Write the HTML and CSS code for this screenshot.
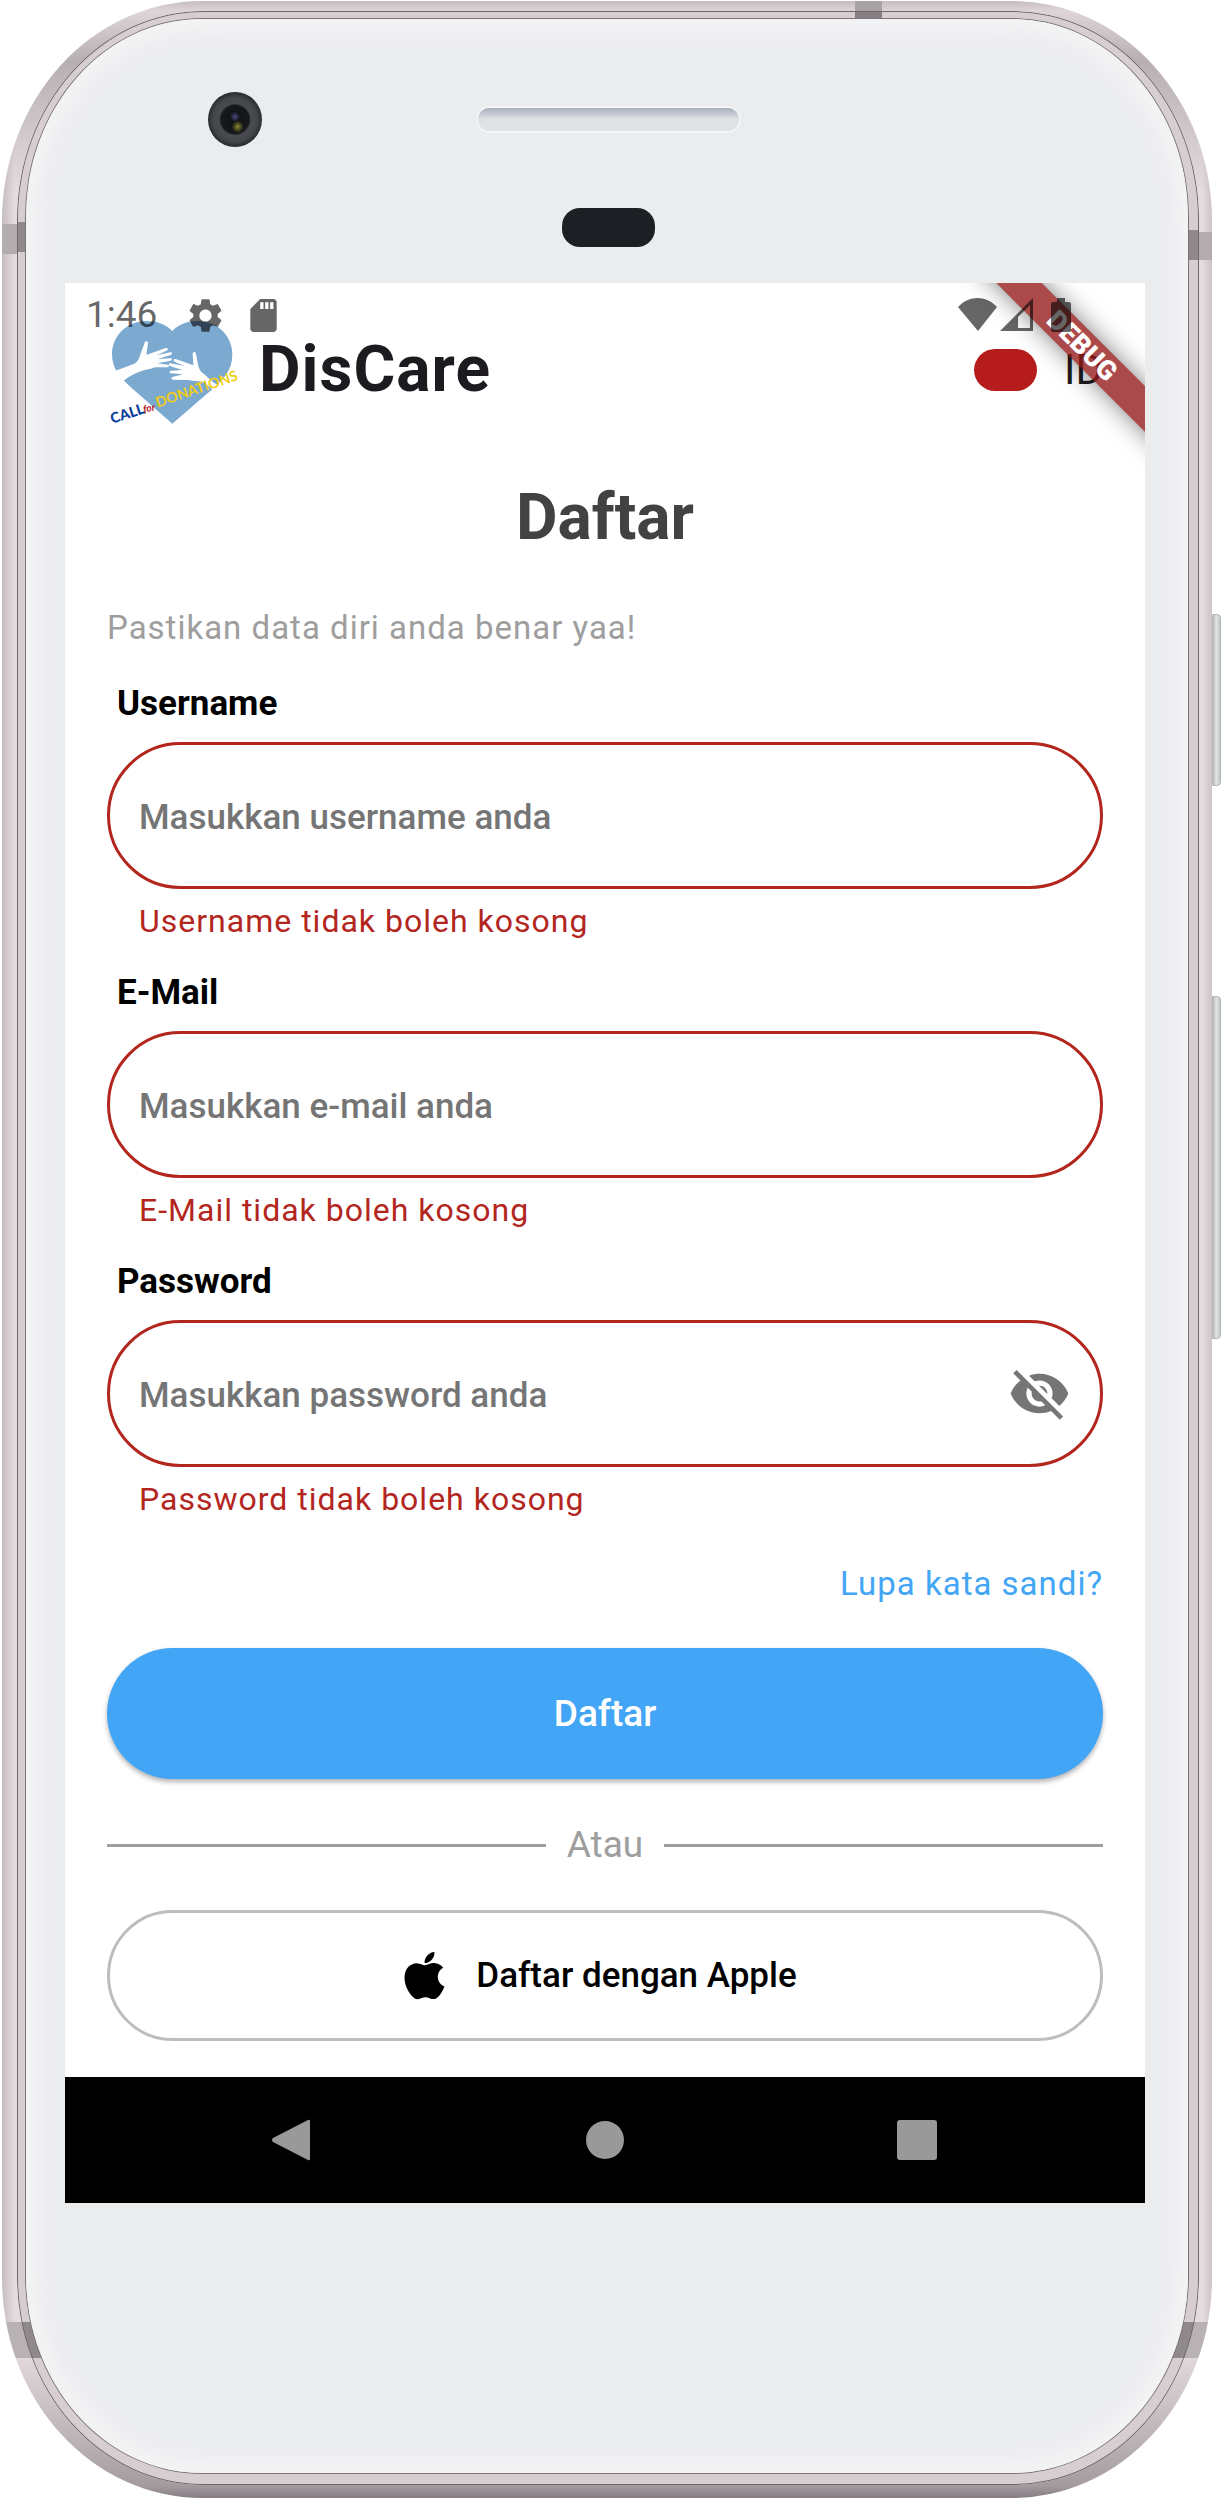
FILE: index.html
```html
<!DOCTYPE html>
<html lang="id">
<head>
<meta charset="utf-8">
<meta name="viewport" content="width=device-width, initial-scale=1">
<title>DisCare - Daftar</title>
<link rel="stylesheet" href="styles.css">
</head>
<body>
<div class="phone">
  <span class="side-key side-key-power"></span>
  <span class="side-key side-key-volume"></span>
  <div class="rim">
    <div class="face">
      <div class="face-top">
        <span class="camera"></span>
        <span class="speaker"></span>
        <span class="sensor"></span>
      </div>

      <div class="screen">
        <main class="app">
          <header class="app-bar">
            <svg class="logo" viewBox="6 9 402 327" role="img" aria-label="Call for Donations">
              <path fill="#7ba9cf" d="M202 57C182 36 155 27 125 27C65 27 21 72 21 127C21 170 45 196 80 228L202 335L326 228C355 202 382 175 382 127C382 72 338 27 279 27C248 27 222 36 202 57Z"/>
              <path fill="#fff" d="M18 182L36 175L88 155C97 150 100 144 103 136L119 92C121 85 130 87 129 94L124 128L134 125L182 108C189 106 191 113 185 116L154 130L196 121C202 120 203 127 197 129L158 141L196 139C202 139 202 146 196 146L158 154L188 158C194 160 192 166 187 166L150 166C138 172 122 173 110 177C90 184 73 192 56 206L30 222Z"/>
              <path fill="#fff" d="M345 222L326 212L297 186C286 179 282 170 279 158L273 125C271 118 263 119 263 126L265 160L212 141C205 139 203 146 209 149L238 162L196 154C190 153 189 160 194 162L232 174L198 176C192 177 193 184 198 184L234 187L202 195C197 197 199 204 205 203L250 204C266 208 283 206 298 211L322 232Z"/>
              <g class="logo-text">
                <text class="logo-call" transform="translate(22 335) rotate(-18)">CALL</text>
                <text class="logo-for" transform="translate(117 302) rotate(-12)">for</text>
                <text class="logo-donations" transform="translate(158 287) rotate(-19)">DONATIONS</text>
              </g>
            </svg>
            <span class="brand">DisCare</span>
            <button class="language" type="button" aria-label="Bahasa Indonesia"><span class="flag"></span>ID</button>
          </header>

          <h1 class="title">Daftar</h1>

          <form class="form">
            <p class="hint">Pastikan data diri anda benar yaa!</p>

            <div class="field">
              <label class="label" for="username">Username</label>
              <div class="box">
                <input class="input" id="username" type="text" placeholder="Masukkan username anda">
              </div>
              <p class="error">Username tidak boleh kosong</p>
            </div>

            <div class="field">
              <label class="label" for="email">E-Mail</label>
              <div class="box">
                <input class="input" id="email" type="email" placeholder="Masukkan e-mail anda">
              </div>
              <p class="error">E-Mail tidak boleh kosong</p>
            </div>

            <div class="field">
              <label class="label" for="password">Password</label>
              <div class="box">
                <input class="input" id="password" type="password" placeholder="Masukkan password anda">
                <button class="reveal" type="button" aria-label="Tampilkan password">
                  <svg viewBox="0 0 24 24" fill="#757575"><path d="M12 7c2.76 0 5 2.24 5 5 0 .65-.13 1.26-.36 1.83l2.92 2.92c1.51-1.26 2.7-2.89 3.43-4.75-1.73-4.39-6-7.5-11-7.5-1.4 0-2.74.25-3.98.7l2.16 2.16C10.74 7.13 11.35 7 12 7zM2 4.27l2.28 2.28.46.46C3.08 8.3 1.78 10.02 1 12c1.73 4.39 6 7.5 11 7.5 1.55 0 3.03-.3 4.38-.84l.42.42L19.73 22 21 20.73 3.27 3 2 4.27zM7.53 9.8l1.55 1.55c-.05.21-.08.43-.08.65 0 1.66 1.34 3 3 3 .22 0 .44-.03.65-.08l1.55 1.55c-.67.33-1.41.53-2.2.53-2.76 0-5-2.24-5-5 0-.79.2-1.53.53-2.2zm4.31-.78l3.15 3.15.02-.16c0-1.66-1.34-3-3-3l-.17.01z"/></svg>
                </button>
              </div>
              <p class="error">Password tidak boleh kosong</p>
            </div>

            <a class="forgot" href="#">Lupa kata sandi?</a>
            <button class="submit" type="submit">Daftar</button>
            <div class="divider">Atau</div>
            <button class="apple" type="button">
              <svg viewBox="0 0 24 24" aria-hidden="true"><path d="M17.05 20.28c-.98.95-2.05.8-3.08.35-1.09-.46-2.09-.48-3.24 0-1.44.62-2.2.44-3.06-.35C2.79 15.25 3.51 7.59 9.05 7.31c1.35.07 2.29.74 3.08.8 1.18-.24 2.31-.93 3.57-.84 1.51.12 2.65.72 3.4 1.8-3.12 1.87-2.38 5.98.48 7.13-.57 1.5-1.31 2.99-2.54 4.09zM12.03 7.25c-.15-2.23 1.66-4.07 3.74-4.25.29 2.58-2.34 4.5-3.74 4.25z"/></svg>
              Daftar dengan Apple
            </button>
          </form>
        </main>

        <div class="debug">DEBUG</div>

        <div class="status">
          <span class="time">1:46</span>
          <svg width="33" height="33" viewBox="2.3 2.3 19.4 19.4"><path d="M19.14 12.94c.04-.3.06-.61.06-.94 0-.32-.02-.64-.07-.94l2.03-1.58c.18-.14.23-.41.12-.61l-1.92-3.32c-.12-.22-.37-.29-.59-.22l-2.39.96c-.5-.38-1.03-.7-1.62-.94l-.36-2.54c-.04-.24-.24-.41-.48-.41h-3.84c-.24 0-.43.17-.47.41l-.36 2.54c-.59.24-1.13.57-1.62.94l-2.39-.96c-.22-.08-.47 0-.59.22L2.74 8.87c-.12.21-.08.47.12.61l2.03 1.58c-.05.3-.09.63-.09.94s.02.64.07.94l-2.03 1.58c-.18.14-.23.41-.12.61l1.92 3.32c.12.22.37.29.59.22l2.39-.96c.5.38 1.03.7 1.62.94l.36 2.54c.05.24.24.41.48.41h3.84c.24 0 .44-.17.47-.41l.36-2.54c.59-.24 1.13-.56 1.62-.94l2.39.96c.22.08.47 0 .59-.22l1.92-3.32c.12-.22.07-.47-.12-.61l-2.01-1.58zM12 15.6c-1.98 0-3.6-1.62-3.6-3.6s1.62-3.6 3.6-3.6 3.6 1.62 3.6 3.6-1.62 3.6-3.6 3.6z"/></svg>
          <svg width="27" height="33" viewBox="4 2 16 20"><path d="M18 2h-8L4.02 8 4 20c0 1.1.9 2 2 2h12c1.1 0 2-.9 2-2V4c0-1.1-.9-2-2-2zm-6 6h-2V4h2v4zm3 0h-2V4h2v4zm3 0h-2V4h2v4z"/></svg>
          <span class="signals">
            <svg width="39" height="33" viewBox="0 0 39 33"><path d="M0 9C11-3 28-3 39 9L20 33Z"/></svg>
            <svg width="33" height="33" viewBox="0 0 33 33"><path fill-rule="evenodd" d="M33 0V33H0ZM30 7L18 19V30H30Z"/></svg>
            <svg width="50" height="34" viewBox="-15 0 50 34"><path d="M6 0H14V4H18Q20 4 20 6V32Q20 34 18 34H2Q0 34 0 32V6Q0 4 2 4H6Z"/></svg>
          </span>
        </div>

        <nav class="nav">
          <button class="nav-key" type="button" aria-label="Kembali"><svg viewBox="3 0 42 42"><path d="M39 1Q41 0 41 2V40Q41 42 39 41L4 23Q2 21 4 19Z"/></svg></button>
          <button class="nav-key" type="button" aria-label="Beranda"><svg viewBox="0 0 42 42"><circle cx="21" cy="21" r="19"/></svg></button>
          <button class="nav-key" type="button" aria-label="Ringkasan"><svg viewBox="0 0 42 42"><rect x="1" y="1" width="40" height="40" rx="3"/></svg></button>
        </nav>
      </div>
    </div>
  </div>
</div>
</body>
</html>
```
FILE: styles.css
```css
* {
  box-sizing: border-box;
}

body {
  margin: 0;
  background: #fff;
  font-family: Roboto, "Liberation Sans", sans-serif;
}

h1, p {
  margin: 0;
}

button {
  border: 0;
  padding: 0;
  background: none;
  font: inherit;
  cursor: pointer;
}

svg {
  display: block;
  flex: none;
  overflow: visible;
}

/* Handset */
.phone {
  position: relative;
  margin: 1px 10px 1px 2px;
  padding: 10px 13px 13px 15px;
  border-radius: 200px / 220px;
  background:
    linear-gradient(#a9a2a5, #a9a2a5) 853px 0 / 27px 15px no-repeat,
    linear-gradient(#b3adb0, #b3adb0) 0 223px / 20px 30px no-repeat,
    linear-gradient(#b3adb0, #b3adb0) 100% 231px / 20px 28px no-repeat,
    linear-gradient(#b8b2b5, #b8b2b5) 0 calc(100% - 140px) / 40px 36px no-repeat,
    linear-gradient(#b8b2b5, #b8b2b5) 100% calc(100% - 140px) / 40px 36px no-repeat,
    linear-gradient(to top, #857d81 0, #a39b9f 12px, #b8afb3 50px, rgba(200, 190, 194, 0) 150px),
    linear-gradient(#c4bcbf 0, #ddd5d8 10px, #b8afb3 60px, rgba(200, 190, 194, 0) 190px),
    linear-gradient(to right, #c6bdc0 0, #e4dcde 13px, #e4dcde calc(100% - 10px), #cdc4c7 100%);
}

.rim {
  padding: 8px 11px 12px 9px;
  border-radius: 186px / 208px;
  background:
    linear-gradient(#857e82, #857e82) 838px 0 / 27px 8px no-repeat,
    linear-gradient(#8f898c, #8f898c) 0 211px / 12px 30px no-repeat,
    linear-gradient(#8f898c, #8f898c) 100% 219px / 12px 30px no-repeat,
    linear-gradient(#8f898c, #8f898c) 0 calc(100% - 127px) / 30px 36px no-repeat,
    linear-gradient(#8f898c, #8f898c) 100% calc(100% - 127px) / 30px 36px no-repeat,
    #d6ced1;
  box-shadow: inset 0 0 0 1px #6f686b;
}

.face {
  padding: 0 43px 270px 39px;
  border-radius: 176px / 198px;
  background: #ebecee;
  box-shadow: 0 0 0 1px #79737a, inset 0 0 20px 12px #f4f4f6;
}

.side-key {
  position: absolute;
  left: 100%;
  width: 9px;
  border: 1px solid #b4b6b6;
  border-radius: 0 4px 4px 0;
  background: linear-gradient(to right, #b9bcbc, #dfe3e3 50%, #c4c8c8);
}

.side-key-power {
  top: 613px;
  height: 172px;
}

.side-key-volume {
  top: 995px;
  height: 343px;
}

.face-top {
  display: grid;
  grid-template-columns: 1fr 261px 1fr;
  grid-template-rows: 55px 39px;
  row-gap: 61px;
  align-items: center;
  padding: 73px 0 36px 6px;
}

.camera {
  width: 54px;
  height: 55px;
  margin-left: 137px;
  border-radius: 50%;
  background:
    radial-gradient(circle at 55% 63%, #8c8a2c 0, rgba(90, 90, 20, 0) 6px),
    radial-gradient(circle at 50% 45%, #4c4a86 0, rgba(60, 60, 110, 0) 5px),
    radial-gradient(circle, #101114 0, #17181b 14px, #4a4b51 16px, #45464b 22px, #2a2b2e 27px);
}

.speaker {
  height: 23px;
  border-radius: 12px;
  background: linear-gradient(#a8afbb, #cfd3da 8px, #dfe2e5 11px, #e0e2e5);
  box-shadow: 0 0 0 2px #f3f4f5;
}

.sensor {
  grid-column: 2;
  justify-self: center;
  width: 93px;
  height: 39px;
  border-radius: 18px;
  background: #1c1f24;
}

/* Screen */
.screen {
  position: relative;
  overflow: hidden;
  background: #fff;
}

.app {
  padding: 32px 42px 36px;
}

.app-bar {
  display: flex;
  align-items: center;
  gap: 18px;
}

.logo {
  width: 134px;
  height: 109px;
}

.logo-text {
  font-family: Lato, sans-serif;
  font-weight: 700;
}

.logo-call {
  font-size: 43px;
  font-weight: 900;
  fill: #0a3d9b;
}

.logo-for {
  font-size: 30px;
  font-style: italic;
  fill: #b5141c;
}

.logo-donations {
  font-size: 43px;
  fill: #f2cd16;
}

.brand {
  color: #1d1b20;
  font-size: 64px;
  font-weight: 700;
  line-height: 74px;
  letter-spacing: 1px;
}

.language {
  display: flex;
  align-items: center;
  gap: 27px;
  margin-left: auto;
  color: #1d1b20;
  font-size: 42px;
  line-height: 50px;
}

.flag {
  width: 63px;
  height: 42px;
  border-radius: 21px;
  background: #b71c1c;
}

.title {
  margin-top: 57px;
  color: #424242;
  font-size: 64px;
  line-height: 74px;
  text-align: center;
}

.form {
  display: flex;
  flex-direction: column;
  margin-top: 53px;
  font-size: 35px;
  line-height: 40px;
}

.hint {
  margin-bottom: 36px;
  color: #9e9e9e;
  font-size: 33px;
  letter-spacing: 1px;
}

.field {
  display: flex;
  flex-direction: column;
  margin-bottom: 34px;
}

.label {
  padding-left: 10px;
  color: #000;
  font-weight: 700;
}

.box {
  display: flex;
  align-items: center;
  height: 147px;
  margin: 18px 0 14px;
  padding: 0 29px;
  border: 3px solid #b3261e;
  border-radius: 74px;
}

.input {
  flex: 1;
  min-width: 0;
  height: 100%;
  border: 0;
  padding: 4px 0 0;
  background: none;
  outline: 0;
  font: 500 35px/40px Roboto, "Liberation Sans", sans-serif;
}

.input::placeholder {
  color: #757575;
  opacity: 1;
}

.reveal svg {
  width: 63px;
  height: 63px;
}

.error {
  padding-left: 32px;
  color: #b3261e;
  font-size: 32px;
  line-height: 36px;
  letter-spacing: 1px;
}

.forgot {
  align-self: flex-end;
  margin: 13px 0 44px;
  color: #42a5f5;
  font-size: 33px;
  letter-spacing: 1px;
  text-decoration: none;
}

.submit {
  height: 131px;
  border-radius: 66px;
  background: #42a5f5;
  box-shadow: 0 3px 5px rgba(0, 0, 0, .3);
  color: #fff;
  font-size: 37px;
  font-weight: 500;
}

.divider {
  display: flex;
  align-items: center;
  gap: 21px;
  margin: 44px 0 43px;
  color: #9e9e9e;
  font-size: 37px;
  line-height: 44px;
}

.divider::before,
.divider::after {
  content: "";
  flex: 1;
  height: 3px;
  background: #9e9e9e;
}

.apple {
  display: flex;
  align-items: center;
  justify-content: center;
  gap: 20px;
  height: 131px;
  padding-right: 20px;
  border: 3px solid #bdbdbd;
  border-radius: 66px;
  color: #000;
  font-weight: 500;
}

.apple svg {
  width: 63px;
  height: 63px;
}

/* Overlays on top of the app */
.debug {
  position: absolute;
  top: 47px;
  right: -77px;
  width: 280px;
  height: 32px;
  background: linear-gradient(rgba(183, 28, 28, .63), rgba(183, 28, 28, .63)), rgba(0, 0, 0, .4);
  box-shadow: 0 0 24px rgba(0, 0, 0, .5);
  color: #fff;
  font-size: 27px;
  font-weight: 900;
  line-height: 32px;
  text-align: center;
  transform: rotate(45deg);
}

.status {
  position: absolute;
  top: 0;
  left: 0;
  right: 0;
  display: flex;
  align-items: center;
  gap: 28px;
  height: 64px;
  padding: 0 59px 0 21px;
  color: rgba(0, 0, 0, .6);
  fill: rgba(0, 0, 0, .6);
}

.time {
  margin-right: 4px;
  font-size: 37px;
  line-height: 44px;
}

.signals {
  display: flex;
  gap: 3px;
  margin-left: auto;
}

.nav {
  display: grid;
  grid-template-columns: repeat(3, 1fr);
  justify-items: center;
  align-items: center;
  height: 126px;
  padding: 0 72px;
  background: #000;
}

.nav-key {
  fill: #999;
}

.nav-key svg {
  width: 42px;
  height: 42px;
}
```
